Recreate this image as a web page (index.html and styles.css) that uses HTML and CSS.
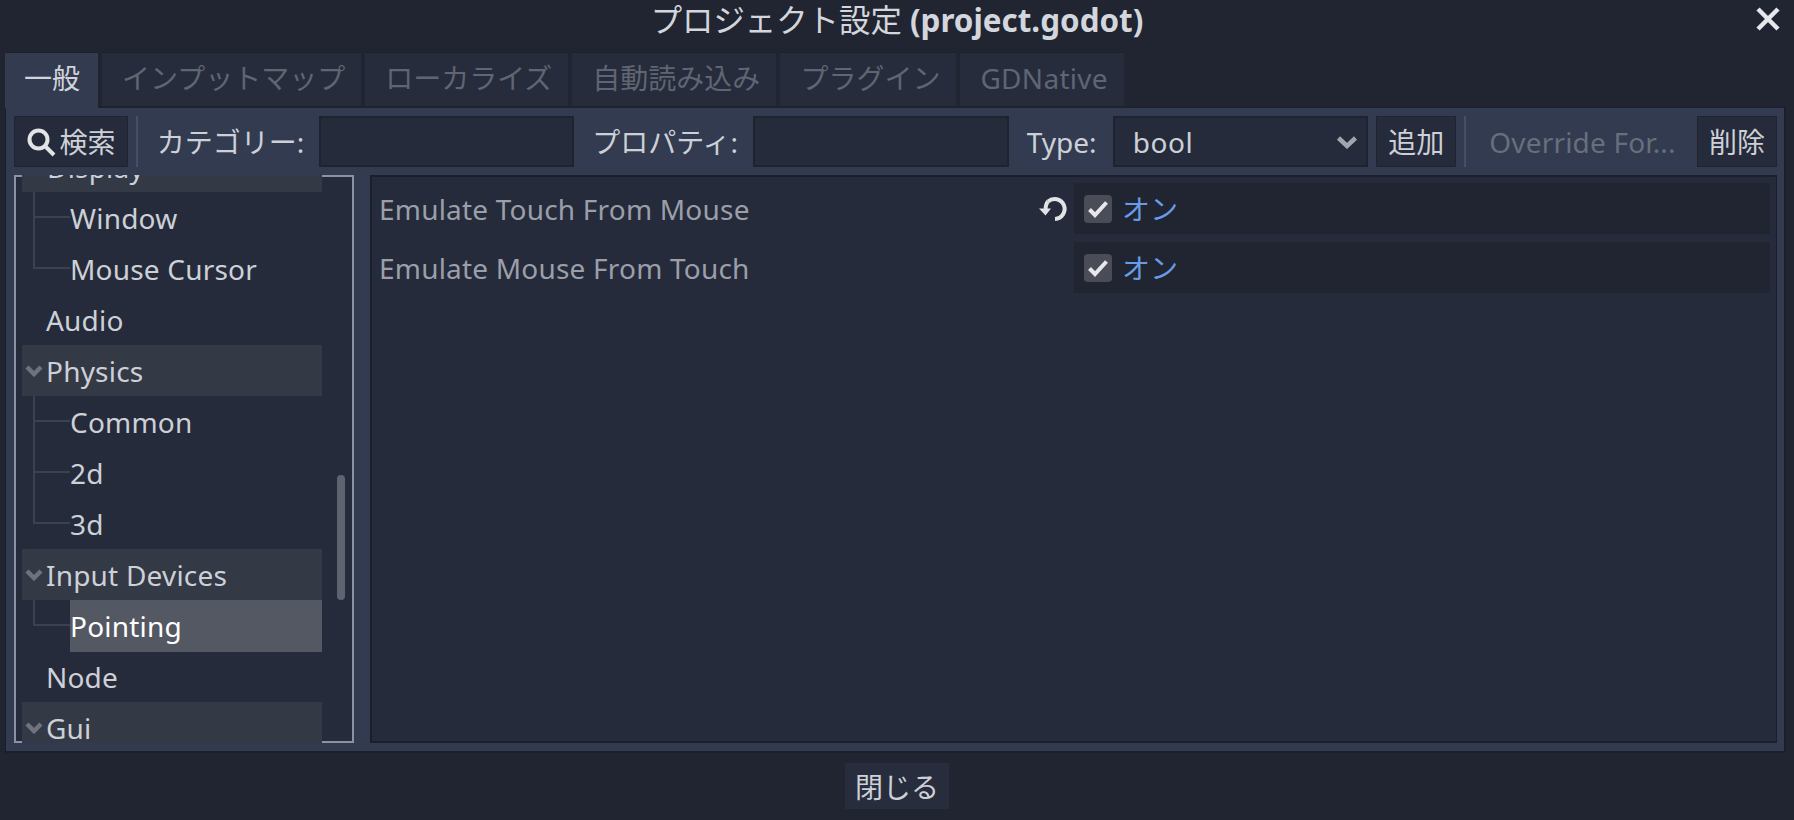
FILE: index.html
```html
<!DOCTYPE html>
<html lang="ja">
<head>
  <meta charset="UTF-8">
  <title>プロジェクト設定</title>
  <link rel="stylesheet" href="styles.css">
</head>
<body>

<div class="titlebar">
  <div class="title">プロジェクト設定 <b>(project.godot)</b></div>
  <svg class="close" width="26" height="26" viewBox="0 0 26 26"><path d="M3 3L23 23M23 3L3 23" /></svg>
</div>

<div class="tabs">
  <div class="tab active">一般</div>
  <div class="tab">インプットマップ</div>
  <div class="tab">ローカライズ</div>
  <div class="tab">自動読み込み</div>
  <div class="tab">プラグイン</div>
  <div class="tab latin">GDNative</div>
</div>

<div class="panel">
  <div class="toolbar">
    <div class="btn search-btn">
      <svg width="30" height="30" viewBox="0 0 30 30"><circle cx="12.5" cy="12.5" r="9" /><path d="M19 19L28 28" /></svg>
      検索
    </div>
    <div class="sep"></div>
    <div class="label cat-label">カテゴリー:</div>
    <div class="input"></div>
    <div class="label prop-label">プロパティ:</div>
    <div class="input"></div>
    <div class="label type-label">Type:</div>
    <div class="input select">
      <span>bool</span>
      <svg width="22" height="14" viewBox="0 0 22 14"><path d="M2.5 3L11 11L19.5 3" /></svg>
    </div>
    <div class="btn small-btn">追加</div>
    <div class="sep"></div>
    <div class="label override">Override For...</div>
    <div class="btn small-btn">削除</div>
  </div>

  <div class="content">
    <div class="tree">
      <div class="tree-rows">
        <div class="row group"><span class="name">Display</span></div>
        <div class="row child">Window</div>
        <div class="row child last">Mouse Cursor</div>
        <div class="row top">Audio</div>
        <div class="row group"><svg class="arrow" width="18" height="12" viewBox="0 0 18 12"><path d="M2 2L9 9L16 2" /></svg>Physics</div>
        <div class="row child">Common</div>
        <div class="row child">2d</div>
        <div class="row child last">3d</div>
        <div class="row group"><svg class="arrow" width="18" height="12" viewBox="0 0 18 12"><path d="M2 2L9 9L16 2" /></svg>Input Devices</div>
        <div class="row child last selected"><span class="sel-text">Pointing</span></div>
        <div class="row top">Node</div>
        <div class="row group"><svg class="arrow" width="18" height="12" viewBox="0 0 18 12"><path d="M2 2L9 9L16 2" /></svg>Gui</div>
      </div>
      <div class="scrollbar"></div>
    </div>

    <div class="inspector">
      <div class="prop">
        <div class="prop-name">Emulate Touch From Mouse</div>
        <svg class="revert" width="30" height="26" viewBox="0 0 30 26"><path class="arc" d="M10 5.5A10 10 0 1 1 17 23" /><path class="head" d="M1 12.5H13L7.5 19.5Z" /><path class="arc" d="M10 5.5Q8 7.5 7.5 13" /></svg>
        <div class="prop-value">
          <div class="checkbox"><svg width="22" height="18" viewBox="0 0 22 18"><path d="M2.5 9.5L8 15L19.5 2.5" /></svg></div>
          <span class="on">オン</span>
        </div>
      </div>
      <div class="prop">
        <div class="prop-name">Emulate Mouse From Touch</div>
        <div class="prop-value">
          <div class="checkbox"><svg width="22" height="18" viewBox="0 0 22 18"><path d="M2.5 9.5L8 15L19.5 2.5" /></svg></div>
          <span class="on">オン</span>
        </div>
      </div>
    </div>
  </div>
</div>

<div class="footer">
  <div class="close-btn">閉じる</div>
</div>

</body>
</html>
```

FILE: styles.css
```css
html, body {
  margin: 0;
  height: 820px;
  overflow: hidden;
}
body {
  background-color: #202531;
  color: #cdd0d7;
  font-family: "Noto Sans", "Noto Sans CJK JP", sans-serif;
  font-size: 28px;
  line-height: 38px;
}
svg {
  fill: none;
  display: block;
}

/* title */
.titlebar {
  height: 52px;
  position: relative;
  display: flex;
  justify-content: center;
}
.title {
  color: #d3d6dc;
  font-size: 31.4px;
  line-height: 40px;
}
.close {
  position: absolute;
  top: 6px;
  right: 13px;
  stroke: #e6e7ea;
  stroke-width: 4.5px;
}

/* tabs */
.tabs {
  display: flex;
  gap: 4px;
  height: 54px;
  margin-left: 5px;
}
.tab {
  padding: 6px 16px 0 20px;
  background-color: #262c3b;
  color: #5f6572;
  border-top: 1px solid #1c212b;
  white-space: nowrap;
}
.tab.latin {
  letter-spacing: 0.3px;
}
.tab.active {
  background-color: #323b50;
  color: #d0d3da;
  padding: 6px 18px 0 19px;
  position: relative;
  z-index: 1;
  margin-bottom: -2px;
}

/* main panel */
.panel {
  margin-left: 5px;
  width: 1781px;
  height: 647px;
  box-sizing: border-box;
  background-color: #323b50;
  border: 2px solid #1b1f2a;
  border-left-width: 1px;
  border-top-color: #1d222c;
  padding: 8px 7px 0 8px;
}
.toolbar {
  display: flex;
  gap: 8px;
  height: 51px;
  align-items: stretch;
}
.btn {
  display: flex;
  align-items: center;
  justify-content: center;
  background-color: #252b3a;
  border: 1px solid #1f2430;
  box-sizing: border-box;
}
.search-btn {
  width: 114px;
  gap: 3px;
}
.search-btn svg {
  stroke: #e2e3e7;
  stroke-width: 4px;
}
.small-btn {
  width: 80px;
}
.sep {
  width: 2px;
  background-color: #454e62;
}
.label {
  flex: none;
  display: flex;
  align-items: center;
  white-space: nowrap;
}
.cat-label {
  width: 159px;
  padding-left: 11px;
  margin-right: 6px;
  box-sizing: border-box;
}
.prop-label {
  width: 154px;
  padding-left: 1px;
  margin-left: 9px;
  box-sizing: border-box;
}
.type-label {
  width: 78px;
  margin-left: 10px;
}
.override {
  width: 215px;
  padding-left: 15px;
  box-sizing: border-box;
  color: #686e7c;
  letter-spacing: 0.2px;
}
.input {
  width: 256px;
  box-sizing: border-box;
  background-color: #252b3a;
  border: 2px solid #1e2330;
}
.select {
  display: flex;
  align-items: center;
  justify-content: space-between;
  padding: 0 8px 0 18px;
  letter-spacing: 0.5px;
}
.select svg {
  stroke: #a2a5ad;
  stroke-width: 4.5px;
}

/* tree and inspector */
.content {
  display: flex;
  gap: 16px;
  margin-top: 8px;
}
.tree {
  width: 340px;
  height: 568px;
  background-color: #252b3a;
  box-shadow: inset 0 0 0 2px #8d92a0;
  overflow: hidden;
  position: relative;
}
.tree-rows {
  margin: -34px 32px 0 8px;
}
.row {
  height: 51px;
  line-height: 52px;
  position: relative;
  padding-left: 24px;
  letter-spacing: 0.2px;
}
.group {
  background-color: #343946;
  display: flex;
  align-items: center;
  padding-left: 3px;
}
.group .arrow {
  stroke: #6f737e;
  stroke-width: 4.5px;
  margin: 0 3px 0 0;
  flex: none;
}
.group .name {
  padding-left: 22px;
}
.child {
  padding-left: 48px;
}
.child::before {
  content: "";
  position: absolute;
  left: 11px;
  top: 0;
  width: 37px;
  height: 100%;
  border-left: 2px solid #3a4151;
  box-sizing: border-box;
}
.child::after {
  content: "";
  position: absolute;
  left: 11px;
  top: 24px;
  width: 37px;
  border-top: 2px solid #3a4151;
}
.child.last::before {
  height: 25px;
}
.selected {
  color: #fff;
  padding-left: 0;
}
.sel-text {
  display: block;
  margin-left: 48px;
  background-color: #545863;
}
.scrollbar {
  position: absolute;
  left: 323px;
  top: 300px;
  width: 8px;
  height: 125px;
  border-radius: 4px;
  background-color: #5e6370;
}
.inspector {
  flex: 1;
  height: 568px;
  box-sizing: border-box;
  background-color: #252b3a;
  border: 2px solid #1b1f2a;
  border-right-width: 1px;
  padding: 6px 6px 0 7px;
}
.prop {
  display: flex;
  align-items: center;
  height: 51px;
  margin-bottom: 8px;
}
.prop-name {
  flex: 1;
  color: #9b9fa9;
  letter-spacing: 0.2px;
}
.revert {
  margin-right: 6px;
}
.revert .arc {
  stroke: #e2e3e7;
  stroke-width: 4px;
}
.revert .head {
  fill: #e2e3e7;
}
.prop-value {
  width: 696px;
  height: 51px;
  background-color: #202531;
  display: flex;
  align-items: center;
  padding-left: 10px;
  box-sizing: border-box;
}
.checkbox {
  width: 28px;
  height: 28px;
  border-radius: 4px;
  background-color: #4a4d58;
  display: flex;
  align-items: center;
  justify-content: center;
}
.checkbox svg {
  stroke: #e8e8ea;
  stroke-width: 4px;
}
.on {
  color: #699ce8;
  margin-left: 10px;
}

/* bottom */
.footer {
  display: flex;
  justify-content: center;
  padding-top: 10px;
}
.close-btn {
  width: 104px;
  height: 46px;
  line-height: 48px;
  text-align: center;
  background-color: #272d3c;
}
```
